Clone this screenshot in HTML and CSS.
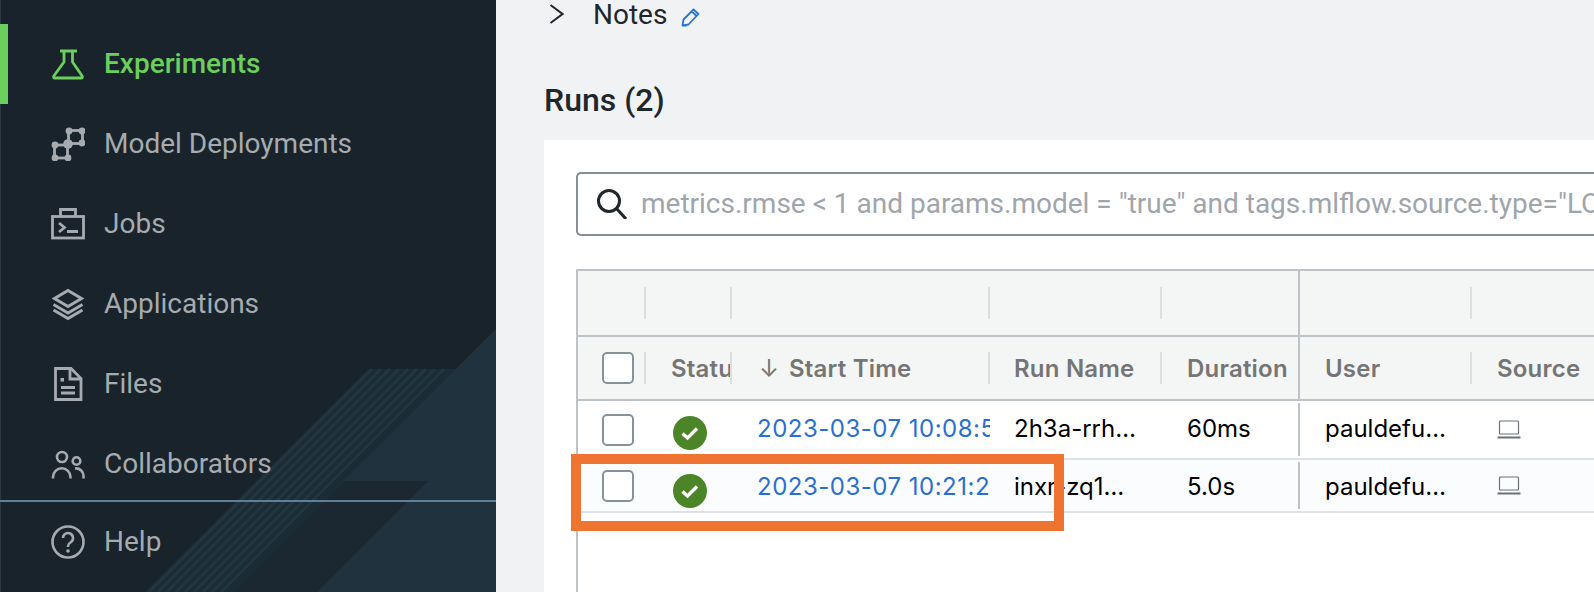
FILE: index.html
```html
<!DOCTYPE html>
<html>
<head>
  <title>Experiment Runs</title>
  <link rel="stylesheet" href="styles.css">
</head>
<body>
  <div class="shell">
    <aside class="sidebar">
      <!-- decoration behind the nav -->
      <svg class="sidebar-bg" width="496" height="592" viewBox="0 0 496 592">
        <polygon points="343,481 428,481 317,592 232,592" fill="#1b2831"/>
        <polygon points="368,369 457,369 234,592 145,592" fill="#1c2c36"/>
        <path d="M372 369L149 592M381 369L158 592M390 369L167 592M399 369L176 592M408 369L185 592M417 369L194 592M426 369L203 592M435 369L212 592M444 369L221 592" stroke="#223640" stroke-width="3"/>
        <polygon points="496,329 343,481 428,481 317,592 496,592" fill="#20323d"/>
      </svg>
      <nav class="nav">
        <a class="nav-item active">
          <svg class="nav-icon" viewBox="0 0 34 34" fill="none" stroke="currentColor" stroke-width="2.8" stroke-linejoin="round"><path d="M9 4h17M13 4v11L2.8 29q-.7 2 1 2h26.4q1.7 0 1-2L21.500 15V4"/></svg>
          <span>Experiments</span>
        </a>
        <a class="nav-item">
          <svg class="nav-icon" viewBox="0 0 34 34" fill="none" stroke="currentColor" stroke-width="2.800"><rect x="17.500" y="3.500" width="14" height="13"/><rect x="3.500" y="18" width="13" height="13"/><g fill="currentColor" stroke="none"><circle cx="18" cy="4" r="3.400"/><circle cx="31" cy="4" r="3.400"/><circle cx="31" cy="16" r="3.400"/><circle cx="17" cy="17" r="4.800"/><circle cx="4" cy="18" r="3.400"/><circle cx="4" cy="31" r="3.400"/><circle cx="17" cy="31" r="3.400"/></g></svg>
          <span>Model Deployments</span>
        </a>
        <a class="nav-item">
          <svg class="nav-icon" viewBox="0 0 34 34" fill="none" stroke="currentColor" stroke-width="2.8"><rect x="1.500" y="9.500" width="31" height="21.500"/><path d="M9.500 9V2.500h15V9M8 16l5.500 4.500L8 25M16 24.500h11"/></svg>
          <span>Jobs</span>
        </a>
        <a class="nav-item">
          <svg class="nav-icon" viewBox="0 0 34 34" fill="none" stroke="currentColor" stroke-width="3"><path d="M17 3.500L30.500 11.500L17 19.500L3.500 11.500Z"/><path d="M2.500 17.500L17 26L31.500 17.500M2.500 23L17 31.500L31.500 23"/></svg>
          <span>Applications</span>
        </a>
        <a class="nav-item">
          <svg class="nav-icon" viewBox="0 0 34 34" fill="none" stroke="currentColor" stroke-width="2.8"><path d="M4.500 1.500H20L30 11.500V32.500H4.500Z"/><path d="M19 1.500V12H30M10 20.500H24M10 26H24"/><rect x="9.500" y="11" width="3.500" height="3.500" fill="currentColor" stroke="none"/></svg>
          <span>Files</span>
        </a>
        <a class="nav-item">
          <svg class="nav-icon" viewBox="0 0 34 34" fill="none" stroke="currentColor" stroke-width="2.6"><circle cx="11" cy="10" r="5"/><circle cx="25.500" cy="14" r="3.800"/><path d="M2 31.500v-1.500a8.500 8.500 0 0 1 17.500 0v1.500M24 21.500a7.500 7.500 0 0 1 8.500 8v2"/></svg>
          <span>Collaborators</span>
        </a>
      </nav>
      <div class="sidebar-foot">
        <a class="nav-item">
          <svg class="nav-icon" viewBox="0 0 34 34" fill="none" stroke="currentColor" stroke-width="2.6"><circle cx="17" cy="17" r="15.500"/><path d="M12 13a5 5 0 1 1 8 4q-3 2-3 4v1"/><circle cx="17" cy="26" r="1.800" fill="currentColor" stroke="none"/></svg>
          <span>Help</span>
        </a>
      </div>
    </aside>

    <main class="content">
      <div class="notes">
        <svg class="chevron" width="15" height="20" viewBox="0 0 15 20" fill="none" stroke="#1f272d" stroke-width="2"><path d="M1.500 1L13.500 10L1.500 19"/></svg>
        <span class="notes-label">Notes</span>
        <svg class="pencil" width="20" height="20" viewBox="0 0 20 20" fill="none" stroke="#2b72d8" stroke-width="1.800" stroke-linejoin="round"><path d="M1.500 18.500L2.500 12.500L12.500 2.500L17.500 7L7.500 17.500ZM11 4.500L15.500 9M1.500 18.500H6"/></svg>
      </div>
      <h2 class="runs-title">Runs (2)</h2>

      <section class="card">
        <div class="search">
          <svg class="search-icon" width="30" height="30" viewBox="0 0 30 30" fill="none" stroke="#1f272d" stroke-width="3"><circle cx="12" cy="12" r="10.500"/><path d="M19.500 19.500L29 30"/></svg>
          <span class="search-text">metrics.rmse &lt; 1 and params.model = "true" and tags.mlflow.source.type="LOCAL"</span>
        </div>

        <div class="table">
          <div class="row row-group">
            <div class="cell c-check"><i class="sep"></i></div>
            <div class="cell c-status"><i class="sep"></i></div>
            <div class="cell c-start"><i class="sep"></i></div>
            <div class="cell c-name"><i class="sep"></i></div>
            <div class="cell c-duration"></div>
            <div class="cell c-user"><i class="sep"></i></div>
            <div class="cell c-source"></div>
          </div>
          <div class="row row-head">
            <div class="cell c-check"><span class="checkbox"></span><i class="sep"></i></div>
            <div class="cell c-status"><span class="label">Status</span><i class="sep"></i></div>
            <div class="cell c-start"><span class="label"><span class="sort">↓</span>Start Time</span><i class="sep"></i></div>
            <div class="cell c-name"><span class="label">Run Name</span><i class="sep"></i></div>
            <div class="cell c-duration"><span class="label">Duration</span></div>
            <div class="cell c-user"><span class="label">User</span><i class="sep"></i></div>
            <div class="cell c-source"><span class="label">Source</span></div>
          </div>
          <div class="row row-one">
            <div class="cell c-check"><span class="checkbox"></span></div>
            <div class="cell c-status"><svg class="ok" width="34" height="34" viewBox="0 0 34 34"><circle cx="17" cy="17" r="17" fill="#4b8528"/><path d="M9.500 17.500L14.500 22L24 12.500" fill="none" stroke="#fff" stroke-width="3.400"/></svg></div>
            <div class="cell c-start"><a class="label link">2023-03-07 10:08:55</a></div>
            <div class="cell c-name"><span class="label">2h3a-rrh…</span></div>
            <div class="cell c-duration"><span class="label">60ms</span></div>
            <div class="cell c-user"><span class="label">pauldefu…</span></div>
            <div class="cell c-source"><svg class="laptop" width="24" height="19" viewBox="0 0 24 19" fill="none" stroke="#6b7176" stroke-width="1.200"><rect x="2.500" y="1" width="19" height="13" rx="1"/><path d="M.5 17.500H23.500" stroke-width="2"/></svg></div>
          </div>
          <div class="row row-two">
            <div class="cell c-check"><span class="checkbox"></span></div>
            <div class="cell c-status"><svg class="ok" width="34" height="34" viewBox="0 0 34 34"><circle cx="17" cy="17" r="17" fill="#4b8528"/><path d="M9.500 17.500L14.500 22L24 12.500" fill="none" stroke="#fff" stroke-width="3.400"/></svg></div>
            <div class="cell c-start"><a class="label link">2023-03-07 10:21:25</a></div>
            <div class="cell c-name"><span class="label">inxr-zq1…</span></div>
            <div class="cell c-duration"><span class="label">5.0s</span></div>
            <div class="cell c-user"><span class="label">pauldefu…</span></div>
            <div class="cell c-source"><svg class="laptop" width="24" height="19" viewBox="0 0 24 19" fill="none" stroke="#6b7176" stroke-width="1.200"><rect x="2.500" y="1" width="19" height="13" rx="1"/><path d="M.5 17.500H23.500" stroke-width="2"/></svg></div>
          </div>
        </div>
      </section>

      <!-- the orange box drawn on top of the screenshot -->
      <div class="callout"></div>
    </main>
  </div>
</body>
</html>
```

FILE: styles.css
```css
* {
  box-sizing: border-box;
}
html, body {
  margin: 0;
  height: 100%;
  overflow: hidden;
}
body {
  font-family: Roboto, sans-serif;
  background-color: #f0f2f4;
}
.shell {
  display: flex;
  height: 100vh;
}

/* sidebar */
.sidebar {
  position: relative;
  flex: 0 0 496px;
  background-color: #18232b;
  overflow: hidden;
  box-shadow: inset 1px 0 #2b363d;
}
.sidebar-bg {
  position: absolute;
  top: 0;
  left: 0;
}
.nav {
  position: relative;
  padding-top: 24px;
}
.nav-item {
  display: flex;
  align-items: center;
  gap: 19px;
  height: 80px;
  padding-left: 51px;
  font-size: 28px;
  color: #a6abb0;
}
.nav-item span {
  margin-top: -2px;
}
.nav-item.active {
  color: #6cce5c;
  font-weight: 500;
  padding-left: 43px;
  border-left: 8px solid #6cce5c;
}
.nav-icon {
  flex: 0 0 34px;
  width: 34px;
  height: 34px;
}
.sidebar-foot {
  position: relative;
  margin-top: -4px;
  border-top: 2px solid #5f7f96;
}

/* main area */
.content {
  position: relative;
  flex: 1;
  min-width: 0;
}
.notes {
  display: flex;
  align-items: center;
  height: 30px;
  padding-left: 53px;
}
.chevron {
  margin-right: 29px;
  margin-bottom: 2px;
}
.notes-label {
  font-size: 28px;
  color: #1f272d;
  margin-bottom: 2px;
}
.pencil {
  margin-left: 14px;
  margin-top: 4px;
}
.runs-title {
  margin: 48px 0 0 48px;
  height: 62px;
  font-size: 32px;
  line-height: 44px;
  font-weight: 500;
  color: #1f272d;
}
.card {
  margin-left: 48px;
  height: 460px;
  padding: 32px 0 0 32px;
  background-color: #fff;
}
.search {
  display: flex;
  align-items: center;
  height: 64px;
  padding-left: 19px;
  border: 2px solid #868e96;
  border-right: none;
  border-radius: 5px 0 0 5px;
  overflow: hidden;
}
.search-icon {
  flex: none;
  margin-right: 14px;
}
.search-text {
  font-size: 28px;
  color: #a0a5ab;
  white-space: nowrap;
  margin-bottom: 2px;
}

/* runs table */
.table {
  margin-top: 33px;
  height: 330px;
  border-left: 2px solid #bdc3c7;
  border-top: 2px solid #bdc3c7;
}
.row {
  display: flex;
}
.row-group {
  height: 66px;
  background-color: #f4f6f6;
  border-bottom: 2px solid #bdc3c7;
}
.row-head {
  height: 64px;
  background-color: #f4f6f6;
  border-bottom: 2px solid #bdc3c7;
  font-family: Inter, sans-serif;
  font-weight: 600;
  font-size: 24px;
  letter-spacing: .2px;
  color: #757575;
}
.row-one, .row-two {
  font-family: Inter, sans-serif;
  font-size: 24px;
  color: #000;
  border-bottom: 2px solid #dfe2e5;
}
.row-one {
  height: 59px;
}
.row-one .label {
  margin-bottom: 2px;
}
.row-two {
  height: 53px;
  background-color: #fbfcfe;
}
.row-two .label {
  margin-top: 2px;
}
.cell {
  display: flex;
  align-items: center;
  padding-left: 25px;
  min-width: 0;
}
.label {
  flex: 1;
  overflow: hidden;
  white-space: nowrap;
}
.link {
  color: #2a6fd0;
  letter-spacing: .5px;
}
.sep {
  flex: none;
  width: 2px;
  height: 32px;
  margin-left: auto;
  background-color: #dadee1;
}
.sort {
  display: inline-block;
  width: 30px;
  margin-left: 2px;
  font-weight: 400;
}
.c-check { width: 68px; padding-left: 24px; }
.c-status { width: 86px; }
.c-start { width: 258px; }
.c-name { width: 172px; padding-left: 24px; }
.c-duration { width: 138px; border-right: 2px solid #bdc3c7; }
.c-user { width: 172px; }
.c-source { flex: 1; }
.row-one .c-duration, .row-two .c-duration {
  margin-top: 2px;
  margin-bottom: 2px;
}
.checkbox {
  flex: none;
  width: 32px;
  height: 32px;
  background-color: #fff;
  border: 2px solid #85929a;
  border-radius: 5px;
}
.ok {
  margin-top: 6px;
  margin-left: 2px;
  flex: none;
}
.row-two .ok {
  margin-top: 10px;
}
.laptop {
  flex: none;
}

/* annotation */
.callout {
  position: absolute;
  top: 454px;
  left: 75px;
  width: 493px;
  height: 77px;
  border: 10px solid #ee7430;
}
```
